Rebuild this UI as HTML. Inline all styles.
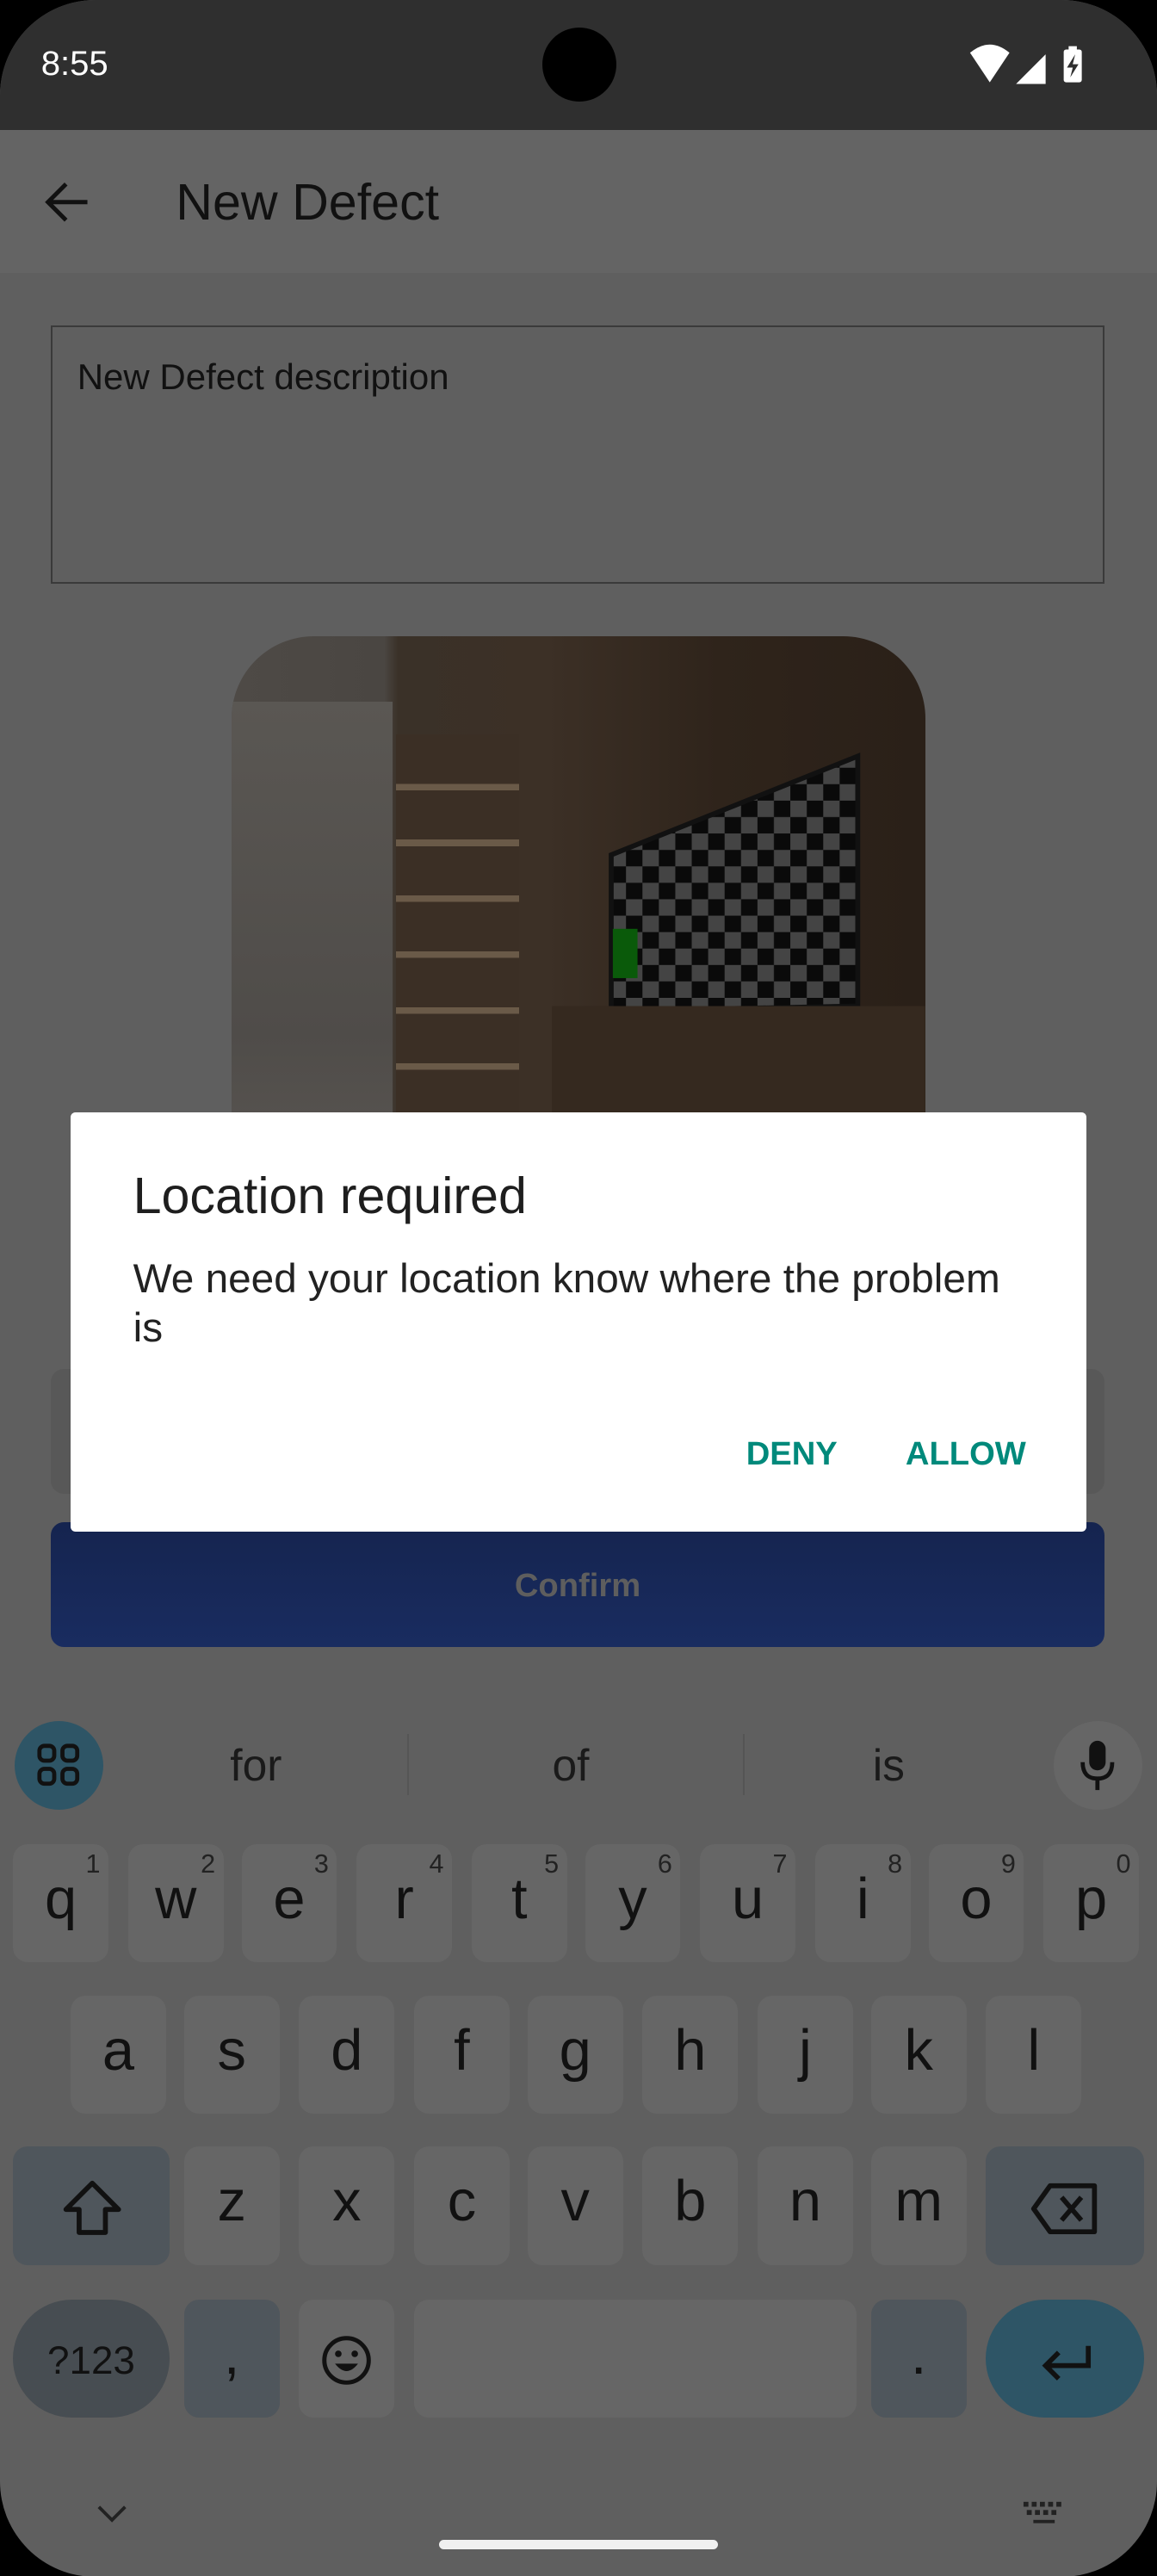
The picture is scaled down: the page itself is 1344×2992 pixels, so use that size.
<!DOCTYPE html>
<html><head><meta charset="utf-8"><style>
html,body{margin:0;padding:0;background:#000;width:1344px;height:2992px;overflow:hidden}
#w{zoom:1.909091;width:704px;height:1568px;position:relative;background:#5f5f5f;border-radius:58px;overflow:hidden;font-family:"Liberation Sans",sans-serif}
.a{position:absolute}
.k{position:absolute;width:58px;height:72px;background:#666;border-radius:9px;color:#111;font-size:35px;text-align:center;line-height:68px}
.k sup{position:absolute;right:5px;top:4px;font-size:16px;line-height:16px;color:#222}
</style></head><body><div id="w">
<div class="a" style="left:0;top:0;width:704px;height:79px;background:#2f2f2f"></div>
<div class="a" style="left:25px;top:27px;color:#fff;font-size:21px">8:55</div>
<div class="a" style="left:330px;top:17px;width:45px;height:45px;border-radius:50%;background:#000"></div>
<svg class="a" style="left:588px;top:24px" width="80" height="32" viewBox="0 0 80 32">
<path d="M2 8 Q14 -2 26 8 L14 26 Z" fill="#fff"/>
<path d="M30 27 L48 9 L48 27 Z" fill="#fff"/>
<rect x="59" y="6" width="11" height="20" rx="1.5" fill="#fff"/><rect x="62" y="4" width="5" height="3" fill="#fff"/>
<path d="M66 9 L61 17 L64.5 17 L63 23 L68 15 L64.5 15 Z" fill="#2f2f2f"/>
</svg>
<div class="a" style="left:0;top:79px;width:704px;height:87px;background:#646464"></div>
<svg class="a" style="left:26px;top:109px" width="30" height="30" viewBox="0 0 30 30"><path d="M27 14 H4 M14 3 L3 14 L14 25" stroke="#111" stroke-width="2.6" fill="none"/></svg>
<div class="a" style="left:107px;top:105px;font-size:31px;color:#111">New Defect</div>
<div class="a" style="left:31px;top:198px;width:639px;height:155px;border:1.5px solid #3a3a3a"></div>
<div class="a" style="left:47px;top:217px;font-size:22px;color:#111">New Defect description</div>
<div class="a" style="left:141px;top:387px;width:422px;height:320px;border-radius:50px 50px 0 0;overflow:hidden;background:linear-gradient(90deg,#4e4a46 0,#4a4642 22%,#3a3128 24%,#3c3026 45%,#2f241b 70%,#2a2018 100%)">
 <div class="a" style="left:0;top:40px;width:98px;height:290px;background:linear-gradient(180deg,#5a5753,#4f4c49 70%,#5a5652)"></div>
 <div class="a" style="left:100px;top:60px;width:75px;height:240px;background:repeating-linear-gradient(180deg,#3b2f25 0,#3b2f25 30px,#6a5a48 30px,#6a5a48 34px)"></div>
 <svg class="a" style="left:0;top:0" width="422" height="320" viewBox="0 0 422 320">
  <defs><pattern id="c" width="20" height="20" patternUnits="userSpaceOnUse"><rect width="20" height="20" fill="#0a0a0a"/><rect width="10" height="10" fill="#444"/><rect x="10" y="10" width="10" height="10" fill="#444"/></pattern></defs>
  <path d="M231 133 L381 73 L381 225 L231 228 Z" fill="url(#c)" stroke="#111" stroke-width="3"/>
  <rect x="232" y="178" width="15" height="30" fill="#0a5a0a"/>
  <rect x="195" y="225" width="227" height="100" fill="#35291f"/>
 </svg>
</div>
<div class="a" style="left:31px;top:833px;width:641px;height:76px;background:#585858;border-radius:8px"></div>
<div class="a" style="left:31px;top:926px;width:641px;height:76px;background:linear-gradient(#15244f,#192c60);border-radius:8px;color:#5e5e5e;font-size:20px;font-weight:bold;text-align:center;line-height:78px">Confirm</div>
<div class="a" style="left:43px;top:677px;width:618px;height:255px;background:#fff;border-radius:3px">
 <div class="a" style="left:38px;top:32px;font-size:31px;color:#1e1e1e">Location required</div>
 <div class="a" style="left:38px;top:86px;width:540px;font-size:25px;line-height:30px;color:#222">We need your location know where the problem is</div>
 <div class="a" style="left:411px;top:196px;font-size:20px;font-weight:bold;color:#00897b">DENY</div>
 <div class="a" style="left:508px;top:196px;font-size:20px;font-weight:bold;color:#00897b">ALLOW</div>
</div>
<!-- keyboard -->
<div class="a" style="left:9px;top:1047px;width:54px;height:54px;border-radius:50%;background:#2e5566"></div>
<svg class="a" style="left:22px;top:1060px" width="28" height="28" viewBox="0 0 28 28" fill="none" stroke="#111" stroke-width="2.5"><rect x="2" y="2" width="9" height="9" rx="3"/><rect x="16" y="2" width="9" height="9" rx="3"/><rect x="2" y="16" width="9" height="9" rx="3"/><rect x="16" y="16" width="9" height="9" rx="3"/></svg>
<div class="a" style="left:140px;top:1058px;font-size:27px;color:#1a1a1a">for</div>
<div class="a" style="left:248px;top:1055px;width:1px;height:37px;background:#555"></div>
<div class="a" style="left:336px;top:1058px;font-size:27px;color:#1a1a1a">of</div>
<div class="a" style="left:452px;top:1055px;width:1px;height:37px;background:#555"></div>
<div class="a" style="left:531px;top:1058px;font-size:27px;color:#1a1a1a">is</div>
<div class="a" style="left:641px;top:1047px;width:54px;height:54px;border-radius:50%;background:#666"></div>
<svg class="a" style="left:655px;top:1058px" width="26" height="32" viewBox="0 0 26 32"><rect x="8" y="1" width="10" height="18" rx="5" fill="#111"/><path d="M4 14 Q4 24 13 24 Q22 24 22 14 M13 24 V31" stroke="#111" stroke-width="2.5" fill="none"/></svg>

<div class="k" style="left:8px;top:1122px">q<sup>1</sup></div>
<div class="k" style="left:78px;top:1122px">w<sup>2</sup></div>
<div class="k" style="left:147px;top:1122px">e<sup>3</sup></div>
<div class="k" style="left:217px;top:1122px">r<sup>4</sup></div>
<div class="k" style="left:287px;top:1122px">t<sup>5</sup></div>
<div class="k" style="left:356px;top:1122px">y<sup>6</sup></div>
<div class="k" style="left:426px;top:1122px">u<sup>7</sup></div>
<div class="k" style="left:496px;top:1122px">i<sup>8</sup></div>
<div class="k" style="left:565px;top:1122px">o<sup>9</sup></div>
<div class="k" style="left:635px;top:1122px">p<sup>0</sup></div>

<div class="k" style="left:43px;top:1214px">a</div>
<div class="k" style="left:112px;top:1214px">s</div>
<div class="k" style="left:182px;top:1214px">d</div>
<div class="k" style="left:252px;top:1214px">f</div>
<div class="k" style="left:321px;top:1214px">g</div>
<div class="k" style="left:391px;top:1214px">h</div>
<div class="k" style="left:461px;top:1214px">j</div>
<div class="k" style="left:530px;top:1214px">k</div>
<div class="k" style="left:600px;top:1214px">l</div>

<div class="k" style="left:8px;top:1306px;width:95px;background:#4f565c"></div>
<svg class="a" style="left:36px;top:1325px" width="40" height="36" viewBox="0 0 40 36"><path d="M20 3 L4 19 H12 V33 H28 V19 H36 Z" fill="none" stroke="#111" stroke-width="3" stroke-linejoin="round"/></svg>
<div class="k" style="left:112px;top:1306px">z</div>
<div class="k" style="left:182px;top:1306px">x</div>
<div class="k" style="left:252px;top:1306px">c</div>
<div class="k" style="left:321px;top:1306px">v</div>
<div class="k" style="left:391px;top:1306px">b</div>
<div class="k" style="left:461px;top:1306px">n</div>
<div class="k" style="left:530px;top:1306px">m</div>
<div class="k" style="left:600px;top:1306px;width:96px;background:#4f565c"></div>
<svg class="a" style="left:626px;top:1327px" width="44" height="34" viewBox="0 0 44 34"><path d="M13 3 H40 V31 H13 L3 17 Z" fill="none" stroke="#111" stroke-width="3" stroke-linejoin="round"/><path d="M20 10 L32 24 M32 10 L20 24" stroke="#111" stroke-width="3"/></svg>

<div class="k" style="left:8px;top:1399px;width:95px;border-radius:36px;background:#474d52;font-size:24px;line-height:74px">?123</div>
<div class="k" style="left:112px;top:1399px;background:#4f565c">,</div>
<div class="k" style="left:182px;top:1399px"></div>
<svg class="a" style="left:195px;top:1420px" width="32" height="32" viewBox="0 0 32 32"><circle cx="16" cy="16" r="13.5" fill="none" stroke="#111" stroke-width="2.6"/><circle cx="11" cy="12" r="2" fill="#111"/><circle cx="21" cy="12" r="2" fill="#111"/><path d="M9 18 Q16 27 23 18 Z" fill="#111"/></svg>
<div class="k" style="left:252px;top:1399px;width:269px"></div>
<div class="k" style="left:530px;top:1399px;background:#4f565c">.</div>
<div class="k" style="left:600px;top:1399px;width:96px;border-radius:36px;background:#2e5566"></div>
<svg class="a" style="left:631px;top:1424px" width="34" height="26" viewBox="0 0 34 26"><path d="M31 3 V15 H5 M13 7 L5 15 L13 23" fill="none" stroke="#111" stroke-width="3"/></svg>

<svg class="a" style="left:58px;top:1522px" width="20" height="14" viewBox="0 0 20 14"><path d="M2 3 L10 11 L18 3" fill="none" stroke="#222" stroke-width="2"/></svg>
<svg class="a" style="left:622px;top:1520px" width="28" height="18" viewBox="0 0 28 18" fill="#222"><rect x="1" y="2" width="3" height="3"/><rect x="6" y="2" width="3" height="3"/><rect x="11" y="2" width="3" height="3"/><rect x="16" y="2" width="3" height="3"/><rect x="21" y="2" width="3" height="3"/><rect x="3" y="7" width="3" height="3"/><rect x="8" y="7" width="3" height="3"/><rect x="13" y="7" width="3" height="3"/><rect x="18" y="7" width="3" height="3"/><rect x="7" y="13" width="13" height="2"/></svg>
<div class="a" style="left:267px;top:1545px;width:170px;height:6px;border-radius:3px;background:#f0f0f0"></div>
</div></body></html>
